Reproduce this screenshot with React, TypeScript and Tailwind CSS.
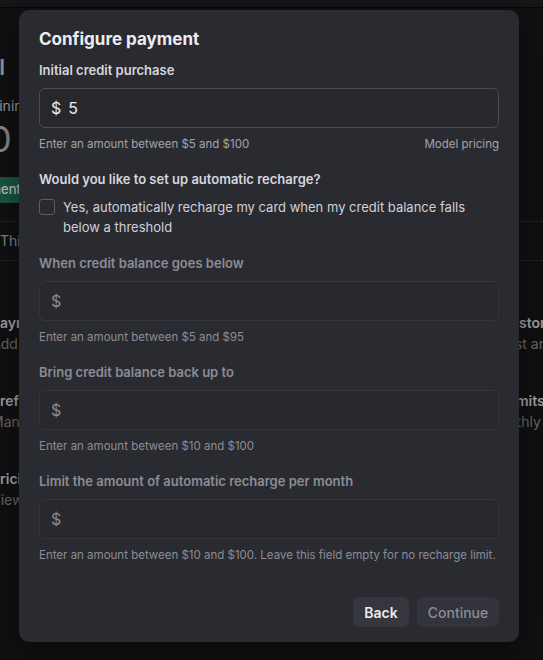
import React from "react";

const limits = [
  {
    label: "When credit balance goes below",
    help: "Enter an amount between $5 and $95",
  },
  {
    label: "Bring credit balance back up to",
    help: "Enter an amount between $10 and $100",
  },
  {
    label: "Limit the amount of automatic recharge per month",
    help: "Enter an amount between $10 and $100. Leave this field empty for no recharge limit.",
  },
];

const cards = [
  { title: "Payment methods", desc: "Add or change payment method" },
  { title: "Billing history", desc: "View past and current invoices" },
  { title: "Preferences", desc: "Manage billing information" },
  { title: "Usage limits", desc: "Set monthly spend limits" },
  { title: "Pricing", desc: "View pricing and FAQs" },
];

function BillingPage() {
  return (
    <div className="h-[660px] bg-[#111113]">
      <div className="h-[8px] bg-[#161618] border-b border-[#060607]" />
      {/* page behind the dialog */}
      <div className="pt-[45px] whitespace-nowrap">
        <div className="-ml-[88px] text-[22px] font-semibold leading-7 text-[#9a9a9c]">Free trial</div>
        <div className="mt-[15px] -ml-[78px] text-[14px] leading-5 text-[#a0a0a2]">Credit remaining</div>
        <div className="mt-[5px] -ml-[34px] text-[36px] leading-[36px] text-[#8c8c8e]">$0</div>
        <div className="mt-[20px] -ml-[74px] inline-flex h-[26px] items-center rounded-[4px] bg-[#1a5a44] px-3 text-[13px] font-medium text-[#c6c6c6]">
          Add payment details
        </div>
        <div className="mt-[18px] border-t border-[#232325]" />
        <div className="py-[9px] text-[14px] leading-5 text-[#8a8a8c]">This month</div>
        <div className="border-t border-[#232325]" />
        <div className="mt-[52px] -ml-[9px] grid grid-cols-[471px_1fr] gap-y-[37px]">
          {cards.map((c) => (
            <div key={c.title}>
              <div className="text-[14px] font-semibold leading-5 text-[#a6a6a8]">{c.title}</div>
              <div className="mt-[1px] text-[14px] leading-5 text-[#6c6c6e]">{c.desc}</div>
            </div>
          ))}
        </div>
      </div>
    </div>
  );
}

function AmountField({ value, disabled }: { value?: string; disabled?: boolean }) {
  return (
    <div
      className={
        "mt-2 flex h-10 items-center rounded-[6px] border px-[11px] text-[16px] " +
        (disabled
          ? "border-[#35363c] bg-[#28292d] text-[#8a8a94]"
          : "border-[#4b4c58] bg-[#27282c] text-[#ececf1]")
      }
    >
      <span>$</span>
      {value && <span className="ml-[7px]">{value}</span>}
    </div>
  );
}

export default function App() {
  return (
    <div className="relative h-[660px] overflow-hidden font-['Inter','Noto_Sans',sans-serif]">
      <BillingPage />

      {/* dialog */}
      <div className="absolute left-[19px] top-[10px] w-[500px] rounded-[10px] bg-[#2a2b30] px-5 pt-[15px] pb-[15px] shadow-[0_10px_40px_rgba(0,0,0,0.5)]">
        <h2 className="text-[17px] font-bold leading-7 text-[#ececf1]">Configure payment</h2>

        <div className="mt-[7px] text-[13px] font-semibold leading-5 text-[#d6d6de]">Initial credit purchase</div>
        <AmountField value="5" />
        <div className="mt-2 flex justify-between text-[11.5px] leading-4 text-[#a3a3ad]">
          <span>Enter an amount between $5 and $100</span>
          <span>Model pricing</span>
        </div>

        <div className="mt-[17px] text-[13px] font-semibold leading-5 text-[#d6d6de]">
          Would you like to set up automatic recharge?
        </div>
        <label className="mt-2 flex items-start gap-2">
          <span className="mt-[2px] h-4 w-4 shrink-0 rounded-[3px] border border-[#5c5d68]" />
          <span className="pr-[30px] text-[13px] leading-5 text-[#d0d0d8]">
            Yes, automatically recharge my card when my credit balance falls below a threshold
          </span>
        </label>

        {limits.map((l, i) => (
          <div key={l.label} className={i === 0 ? "mt-4" : "mt-[17px]"}>
            <div className="text-[13px] font-semibold leading-5 text-[#8c8c95]">{l.label}</div>
            <AmountField disabled />
            <div className="mt-2 text-[11.5px] leading-4 text-[#8c8c95]">{l.help}</div>
          </div>
        ))}

        <div className="mt-[34px] flex justify-end gap-2">
          <button className="h-[30px] w-[56px] rounded-[6px] bg-[#36373e] text-[14px] font-semibold text-[#ececf1]">
            Back
          </button>
          <button className="h-[30px] w-[82px] rounded-[6px] bg-[#33343b] text-[14px] font-medium text-[#8c8c95]">
            Continue
          </button>
        </div>
      </div>
    </div>
  );
}
